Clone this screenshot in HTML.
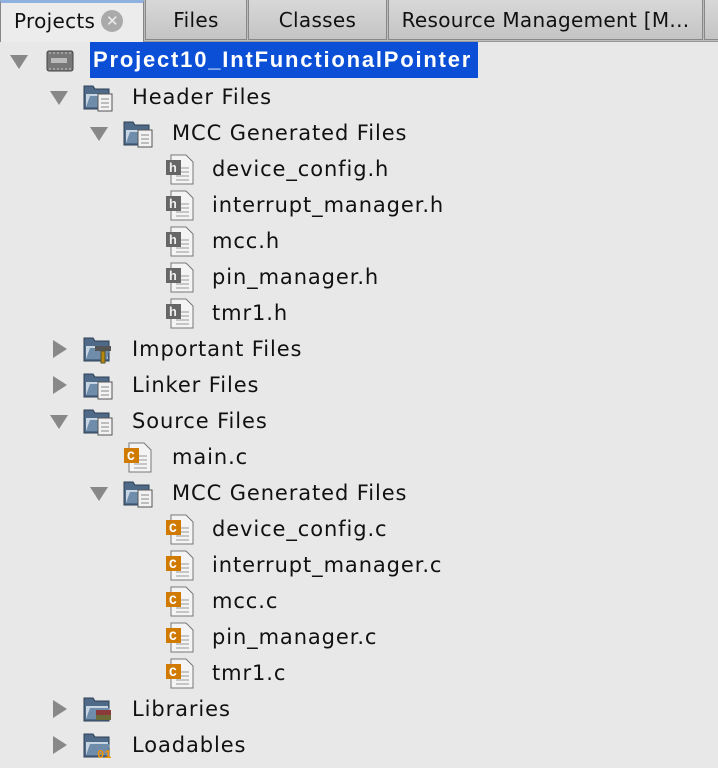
<!DOCTYPE html>
<html><head><style>
body{margin:0;width:718px;height:768px;background:#e8e8e8;font-family:"DejaVu Sans",sans-serif;overflow:hidden;position:relative}
.tabs{position:absolute;left:0;top:0;width:718px;height:41px;background:#bdbdbd;border-bottom:1px solid #999}
.tab{position:absolute;top:0;height:40px;background:linear-gradient(#d8d8d8,#c4c4c4);border:1px solid #888;border-top:none;box-sizing:border-box;font-size:20px;letter-spacing:0.3px;color:#111;line-height:40px;text-align:center;white-space:nowrap;overflow:hidden}
.tab.act{background:#ececec;border-top:3px solid #8fb2e0;line-height:36px;height:42px;text-align:left;padding-left:13px;border-bottom:none}
.x{display:inline-block;width:22px;height:22px;border-radius:50%;background:#aaa;color:#eee;font-size:15px;line-height:22px;text-align:center;vertical-align:middle;margin-left:6px;position:relative;top:-2px;letter-spacing:0}
.row{position:absolute;height:36px;line-height:36px;font-size:21px;letter-spacing:0.9px;color:#111;white-space:nowrap}
.arr{position:absolute;width:0;height:0}
.down{border-left:9px solid transparent;border-right:9px solid transparent;border-top:14px solid #888}
.right{border-top:9px solid transparent;border-bottom:9px solid transparent;border-left:14px solid #888}
.ico{position:absolute}
</style></head><body>
<div class="tabs">
<div class="tab act" style="left:0;width:144px">Projects<span class="x">✕</span></div>
<div class="tab" style="left:145px;width:102px">Files</div>
<div class="tab" style="left:248px;width:139px">Classes</div>
<div class="tab" style="left:388px;width:315px">Resource Management [M...</div>
<div class="tab" style="left:704px;width:20px"></div>
</div>
<svg width="0" height="0" style="position:absolute"><defs>
<g id="fold"><path d="M1 4h9l2 3h14v20H1z" fill="#4e6a88" stroke="#2d3f55"/><path d="M3 12h22v13H3z" fill="#c7d5e3"/><path d="M3 25l4-11h20l-3 11z" fill="#6f8cab"/></g>
<g id="doc"><path d="M6 1h15l7 7v22H6z" fill="#f4f4f4" stroke="#777"/><path d="M11 14h13M11 18h13M11 22h13M11 26h13" stroke="#999"/></g>
</defs></svg>
<div id="tree"></div>
<script>
const rows=[
[0,'chip','Project10_IntFunctionalPointer','d'],
[1,'fd','Header Files','d'],
[2,'fd','MCC Generated Files','d'],
[3,'h','device_config.h'],[3,'h','interrupt_manager.h'],[3,'h','mcc.h'],[3,'h','pin_manager.h'],[3,'h','tmr1.h'],
[1,'fi','Important Files','r'],[1,'fd','Linker Files','r'],[1,'fd','Source Files','d'],
[2,'c','main.c'],[2,'fd','MCC Generated Files','d'],
[3,'c','device_config.c'],[3,'c','interrupt_manager.c'],[3,'c','mcc.c'],[3,'c','pin_manager.c'],[3,'c','tmr1.c'],
[1,'fl','Libraries','r'],[1,'fo','Loadables','r']];
let h='';
rows.forEach((r,i)=>{
 const y=43+i*36, lv=r[0];
 const ax=[10,50,90,130][lv], ix=[45,83,123,165][lv], tx=[93,132,172,212][lv];
 if(r[3]=='d')h+=`<div class="arr down" style="left:${ax}px;top:${y+12}px"></div>`;
 if(r[3]=='r')h+=`<div class="arr right" style="left:${ax+3}px;top:${y+9}px"></div>`;
 let ic='';
 if(r[1]=='chip')ic=`<rect x="2" y="5" width="26" height="20" rx="2" fill="#777" stroke="#444"/><rect x="6" y="12" width="16" height="5" fill="#bbb"/><path d="M4 7h22M4 23h22" stroke="#ccc" stroke-dasharray="2 2"/>`;
 else if(r[1]=='fd')ic=`<use href="#fold"/><path d="M15 12h14v17H15z" fill="#f2f2f2" stroke="#555"/><path d="M18 17h8M18 21h8M18 25h8" stroke="#888"/>`;
 else if(r[1]=='fi')ic=`<use href="#fold"/><path d="M12 12h16v5H12z" fill="#555"/><path d="M18 17h4v12h-4z" fill="#b8860b" stroke="#553"/>`;
 else if(r[1]=='fl')ic=`<use href="#fold"/><path d="M13 16h15v5H13z" fill="#8b3a3a"/><path d="M13 21h15v5H13z" fill="#6b6b3a"/>`;
 else if(r[1]=='fo')ic=`<use href="#fold"/><text x="14" y="28" font-size="12" font-family="Liberation Mono" font-weight="bold" fill="#f29200">01</text>`;
 else if(r[1]=='h')ic=`<use href="#doc"/><rect x="1" y="6" width="15" height="15" fill="#666"/><text x="4" y="18" font-size="13" font-family="Liberation Mono" font-weight="bold" fill="#eee">h</text>`;
 else if(r[1]=='c')ic=`<use href="#doc"/><rect x="1" y="6" width="15" height="15" fill="#d07a00"/><text x="4" y="18" font-size="13" font-family="Liberation Mono" font-weight="bold" fill="#fff">C</text>`;
 h+=`<svg class="ico" width="30" height="31" style="left:${ix}px;top:${y+3}px">${ic}</svg>`;
 if(lv==0)h+=`<div class="row" style="left:90px;top:${y-1}px;width:385px;padding-left:3px;background:#0a4fd6;color:#fff;font-weight:bold;font-family:'Liberation Sans',sans-serif;font-size:22px;letter-spacing:1.8px">${r[2]}</div>`;
 else h+=`<div class="row" style="left:${tx}px;top:${y}px">${r[2]}</div>`;
});
document.getElementById('tree').innerHTML=h;
</script>
</body></html>
